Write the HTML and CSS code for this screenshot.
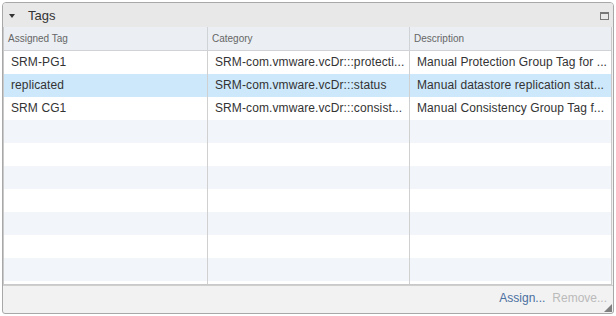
FILE: index.html
```html
<!DOCTYPE html>
<html>
<head>
<meta charset="utf-8">
<link rel="stylesheet" href="styles.css">
</head>
<body>
<div class="panel">
  <div class="titlebar">
    <span class="caret"></span>
    <span class="title">Tags</span>
    <span class="max"></span>
  </div>
  <div class="grid">
    <div class="row head">
      <div class="cell">Assigned Tag</div>
      <div class="cell">Category</div>
      <div class="cell">Description</div>
    </div>
    <div class="row">
      <div class="cell">SRM-PG1</div>
      <div class="cell">SRM-com.vmware.vcDr:::protecti...</div>
      <div class="cell">Manual Protection Group Tag for ...</div>
    </div>
    <div class="row sel">
      <div class="cell">replicated</div>
      <div class="cell">SRM-com.vmware.vcDr:::status</div>
      <div class="cell">Manual datastore replication stat...</div>
    </div>
    <div class="row">
      <div class="cell">SRM CG1</div>
      <div class="cell">SRM-com.vmware.vcDr:::consist...</div>
      <div class="cell">Manual Consistency Group Tag f...</div>
    </div>
    <div class="row alt"><div class="cell"></div><div class="cell"></div><div class="cell"></div></div>
    <div class="row"><div class="cell"></div><div class="cell"></div><div class="cell"></div></div>
    <div class="row alt"><div class="cell"></div><div class="cell"></div><div class="cell"></div></div>
    <div class="row"><div class="cell"></div><div class="cell"></div><div class="cell"></div></div>
    <div class="row alt"><div class="cell"></div><div class="cell"></div><div class="cell"></div></div>
    <div class="row"><div class="cell"></div><div class="cell"></div><div class="cell"></div></div>
    <div class="row alt"><div class="cell"></div><div class="cell"></div><div class="cell"></div></div>
    <div class="row tail"><div class="cell"></div><div class="cell"></div><div class="cell"></div></div>
  </div>
  <div class="footer">
    <span class="link">Assign...</span>
    <span class="link off">Remove...</span>
    <span class="grip"></span>
  </div>
</div>
</body>
</html>
```
FILE: styles.css
```css
* { box-sizing: border-box; }
body {
  margin: 0;
  background: #fff;
  font-family: "Liberation Sans", Arial, sans-serif;
  color: #333;
}
.panel {
  margin: 2px 0 0 2px;
  width: 612px;
  height: 312px;
  border: 1px solid #a8a8a8;
  border-radius: 4px 4px 3px 3px;
  background: #f2f2f2;
  display: flex;
  flex-direction: column;
  overflow: hidden;
}
.titlebar {
  height: 24px;
  background: #e8e8e8;
  display: flex;
  align-items: center;
  padding-left: 6px;
  flex: none;
}
.caret {
  width: 0;
  height: 0;
  border-left: 3.5px solid transparent;
  border-right: 3.5px solid transparent;
  border-top: 4px solid #333;
  margin-top: 1px;
}
.title {
  font-size: 13px;
  color: #333;
  margin-left: 13px;
  margin-top: 1px;
  flex: 1;
}
.max {
  width: 9px;
  height: 8px;
  border: 1px solid #777;
  border-top-width: 2px;
  margin-right: 4px;
  margin-top: 1px;
}
.grid {
  margin: 0 1px 0 0;
  border: 1px solid #c9c9c9;
  border-top: none;
  background: #fff;
  flex: none;
  height: 258px;
  overflow: hidden;
}
.row {
  display: grid;
  grid-template-columns: 204px 202px 1fr;
  height: 23px;
}
.cell {
  border-right: 1px solid #d0d0d0;
  padding-left: 7px;
  font-size: 12px;
  line-height: 23px;
  white-space: nowrap;
  overflow: hidden;
  padding-right: 2px;
  letter-spacing: 0.1px;
}
.cell:last-child { border-right: none; }
.row.head {
  background: #ebeff3;
  border-bottom: 1px solid #cfd3d6;
  height: 24px;
}
.row.head .cell {
  font-size: 10px;
  color: #666;
  padding-left: 4px;
  line-height: 24px;
  letter-spacing: 0;
  border-right-color: #cfd3d6;
}
.row.sel { background: #cde8fb; }
.row.alt { background: #f2f6fa; }
.row.tail { height: 4px; }
.footer {
  flex: 1;
  border-top: 1px solid #cfcfcf;
  display: flex;
  align-items: center;
  justify-content: flex-end;
  padding-right: 6px;
  position: relative;
  font-size: 12px;
}
.link { color: #4a6fa0; margin-left: 7px; margin-top: -3px; }
.link.off { color: #bababa; }
.grip {
  position: absolute;
  right: 1px;
  bottom: 1px;
  width: 8px;
  height: 8px;
  background-image: radial-gradient(circle, #777 0.7px, transparent 0.8px);
  background-size: 2px 2px;
  clip-path: polygon(100% 0, 100% 100%, 0 100%);
}
```
